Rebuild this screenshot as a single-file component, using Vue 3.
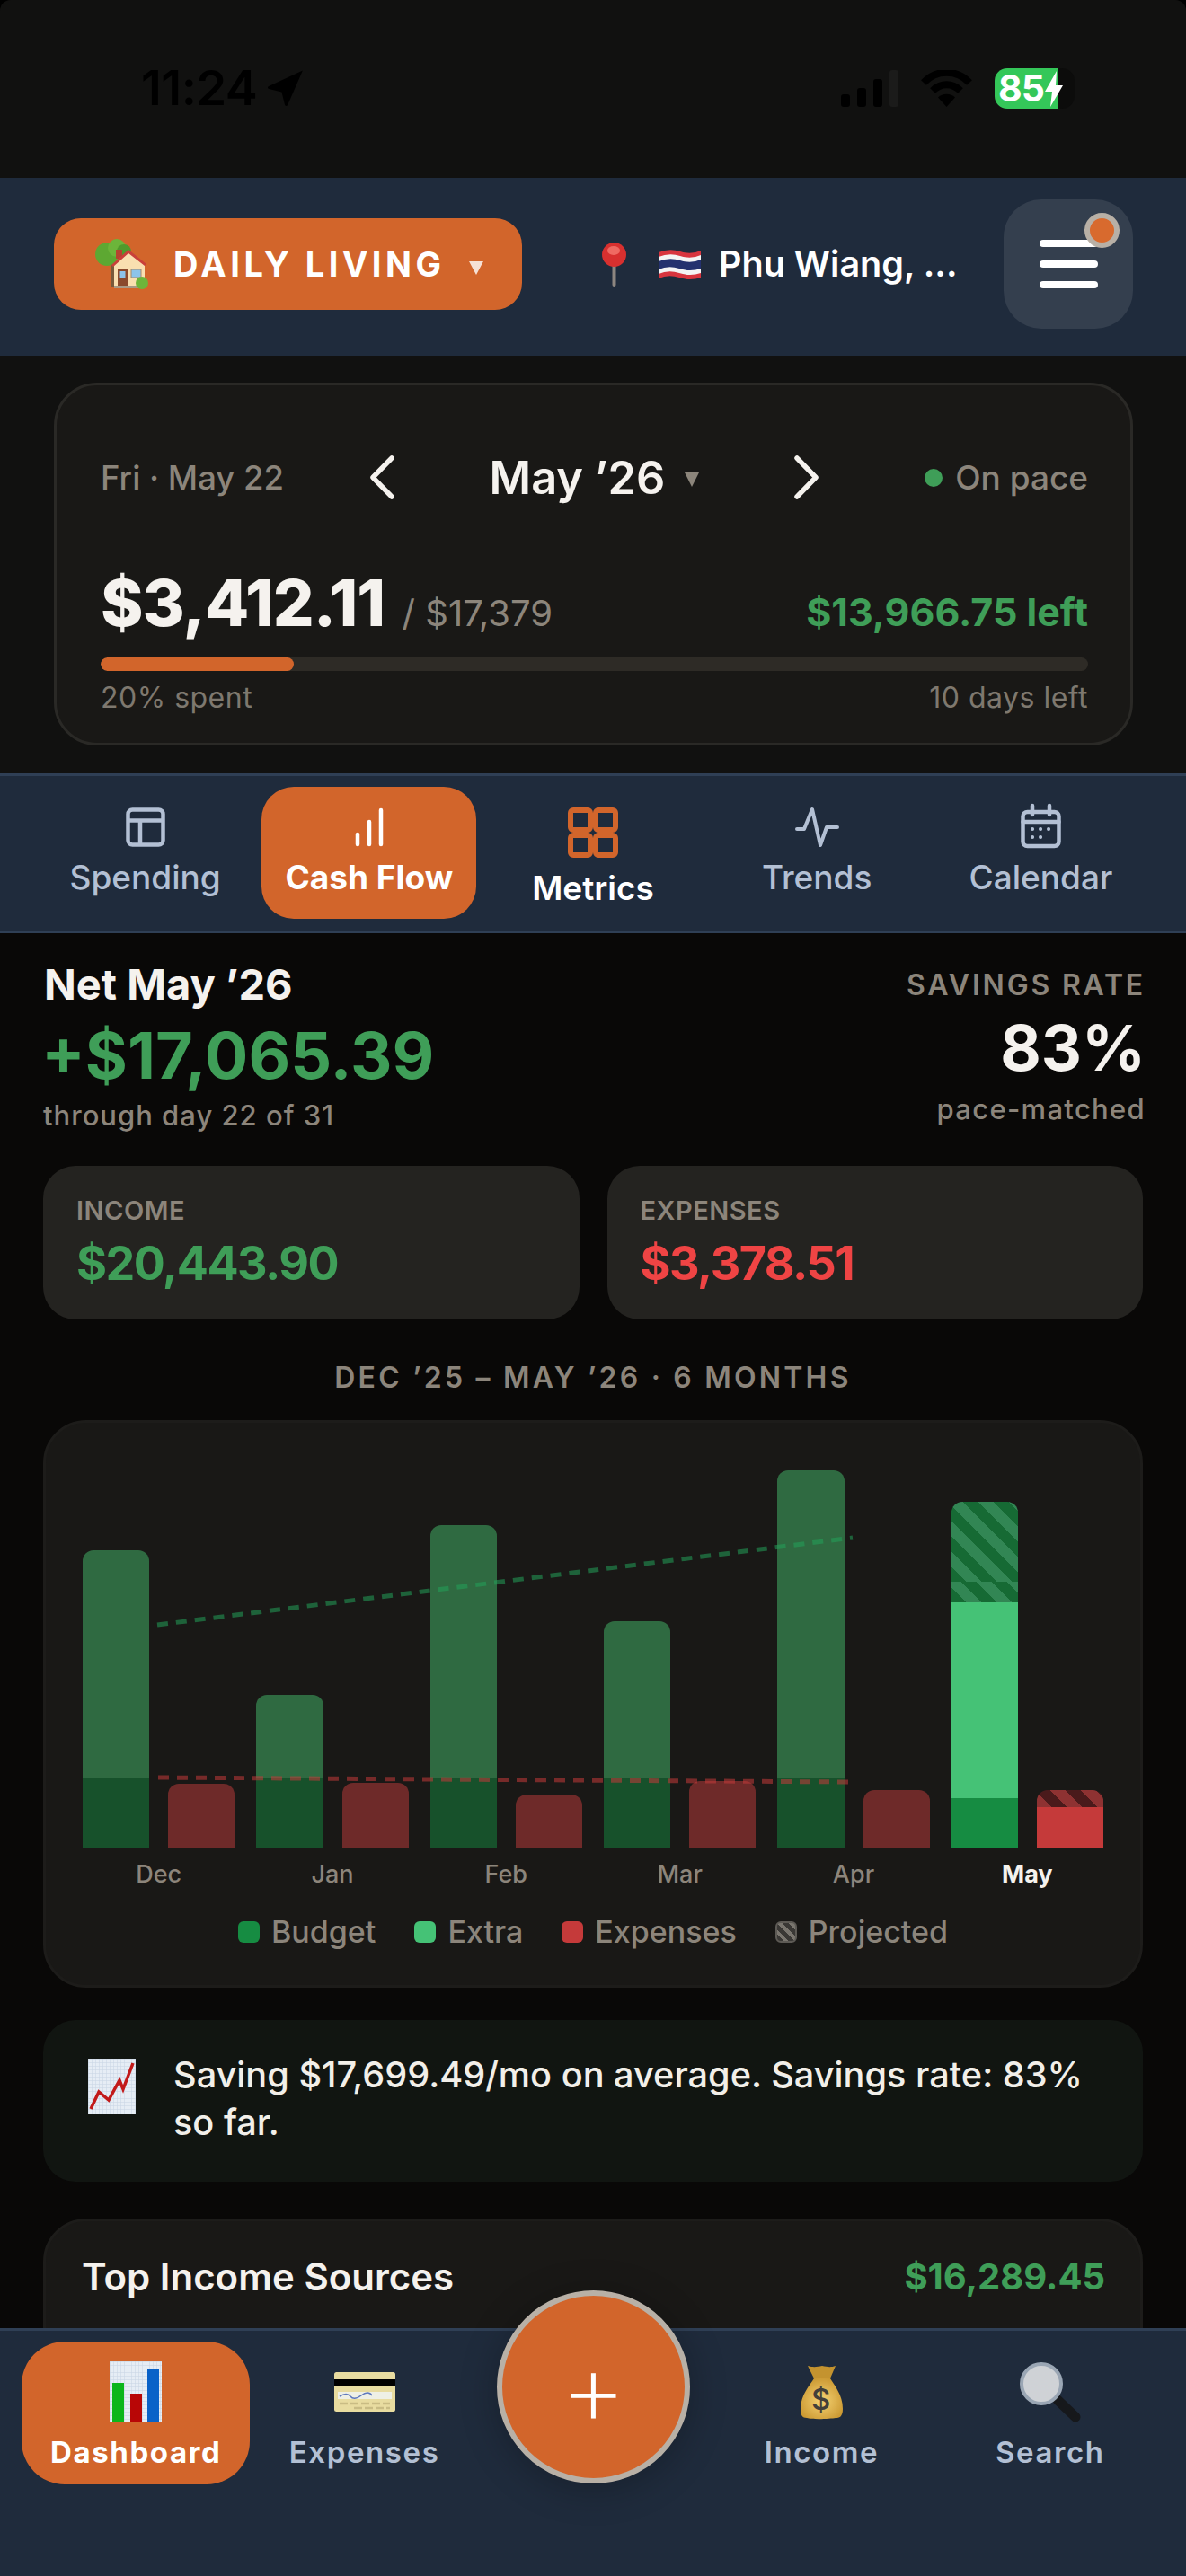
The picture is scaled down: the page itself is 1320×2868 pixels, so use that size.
<template>
  <div class="phone">
    <div class="status-bar">
      <div class="status-left">
        <span class="time">11:24</span>
        <svg class="loc-arrow" width="44" height="42" viewBox="0 0 40 40"><path d="M38 1.500 22 38c-.7 1.600-2.600 1.400-3-.3L15.700 24.300 2.300 21c-1.700-.4-1.900-2.300-.3-3L38 1.500Z" fill="#000"/></svg>
      </div>
      <div class="status-right">
        <div class="signal">
          <i style="height: 14px"></i>
          <i style="height: 21px"></i>
          <i style="height: 31px"></i>
          <i class="dim" style="height: 41px"></i>
        </div>
        <svg width="57" height="41" viewBox="0 0 57 41" fill="none" stroke="#000" stroke-width="8">
          <path d="M3 14C17-1 40-1 54 14"/>
          <path d="M13 23c9-9 22-9 31 0"/>
          <path d="M28.500 41 19 30.500c5-5 14-5 19 0L28.500 41Z" fill="#000" stroke="none"/>
        </svg>
        <div class="battery">
          <span class="battery-fill">85</span>
          <span class="battery-end"></span>
          <svg class="bolt" width="22" height="40" viewBox="0 0 22 40"><path d="M14 0 1 23h8L7 40l14-24h-8l1-16Z" fill="#fff"/></svg>
        </div>
      </div>
    </div>

    <header class="top-bar">
      <button class="plan-pill">
        <svg class="house" width="59" height="56" viewBox="0 0 59 56">
          <rect x="17" y="26" width="4" height="28" fill="#7a5a3a"/>
          <circle cx="13" cy="17" r="13" fill="#5da832"/>
          <circle cx="24" cy="10" r="10" fill="#6cb53a"/>
          <circle cx="32" cy="14" r="8" fill="#4f9a2c"/>
          <rect x="23" y="12" width="7" height="10" fill="#b5432f"/>
          <path d="M21 28 37 15l18 13v26H21Z" fill="#f9dfb0"/>
          <path d="M18 29 37 12l20 16-2 2-18-14-17 15Z" fill="#c9403a"/>
          <rect x="25" y="33" width="11" height="21" fill="#8a4a2c"/>
          <rect x="27.500" y="36" width="6" height="7" fill="#8cc4ea"/>
          <rect x="40" y="34" width="11" height="9" fill="#8cc4ea" stroke="#a88a66" stroke-width="1"/>
          <rect x="21" y="52" width="30" height="3" fill="#a89a86"/>
          <circle cx="52" cy="49" r="7" fill="#6cb53a"/>
        </svg>
        <span class="plan-name">DAILY LIVING</span>
        <span class="plan-caret"></span>
      </button>
      <div class="place">
        <svg width="27" height="49" viewBox="0 0 27 49">
          <rect x="11.500" y="20" width="4" height="29" rx="2" fill="#8d8680"/>
          <circle cx="13.500" cy="13.500" r="13.500" fill="#d8302f"/>
          <ellipse cx="13" cy="9" rx="7" ry="5" fill="#ef6a62"/>
        </svg>
        <svg class="flag" width="47" height="33" viewBox="0 0 47 33">
          <path d="M0 3Q12-2 24 2T47 1V31Q35 35 23 31T0 32Z" fill="#d8353f"/>
          <path d="M0 8Q12 3 24 7T47 6V26Q35 30 23 26T0 27Z" fill="#f4f4f4"/>
          <path d="M0 13Q12 8 24 12T47 11V21Q35 25 23 21T0 22Z" fill="#24316e"/>
        </svg>
        <span class="place-name">Phu Wiang, ...</span>
      </div>
      <button class="menu-btn">
        <i></i><i></i><i></i>
        <span class="menu-dot"></span>
      </button>
    </header>

    <section class="summary-wrap">
      <div class="summary-card">
        <div class="date-row">
          <span class="today">Fri · May 22</span>
          <div class="month-nav">
            <svg width="28" height="49" viewBox="0 0 28 49" fill="none" stroke="#f5f2ee" stroke-width="5.500" stroke-linecap="round" stroke-linejoin="round"><path d="M25 3 4 24.500 25 46"/></svg>
            <div class="month"><span>May ’26</span><b class="month-caret"></b></div>
            <svg width="28" height="49" viewBox="0 0 28 49" fill="none" stroke="#f5f2ee" stroke-width="5.500" stroke-linecap="round" stroke-linejoin="round"><path d="M3 3 24 24.500 3 46"/></svg>
          </div>
          <div class="pace"><i></i><span>On pace</span></div>
        </div>
        <div class="amount-row">
          <div><span class="spent">$3,412.11</span> <span class="budget">/ $17,379</span></div>
          <span class="left">$13,966.75 left</span>
        </div>
        <div class="progress"><div class="progress-fill" :style="{ width: spentPct + '%' }"></div></div>
        <div class="progress-labels">
          <span>20% spent</span>
          <span>10 days left</span>
        </div>
      </div>
    </section>

    <nav class="tabs">
      <div v-for="t in tabs" :key="t.name" class="tab" :class="{ active: t.name === 'Cash Flow', metrics: t.name === 'Metrics' }">
        <svg v-if="t.name === 'Spending'" width="44" height="44" viewBox="0 0 44 44" fill="none" stroke="#b3c0d4" stroke-width="4.500" stroke-linejoin="round">
          <rect x="2.500" y="2.500" width="39" height="39" rx="5"/><path d="M2.500 14.500h39M16 14.500v27"/>
        </svg>
        <svg v-if="t.name === 'Cash Flow'" width="32" height="44" viewBox="0 0 32 44" fill="none" stroke="#fff" stroke-width="4.500" stroke-linecap="round">
          <path d="M3 30v11M16 16v25M29 3v38"/>
        </svg>
        <svg v-if="t.name === 'Metrics'" width="56" height="56" viewBox="0 0 56 56" fill="none" stroke="#d2652b" stroke-width="6">
          <rect x="3" y="3" width="22" height="22" rx="3"/><rect x="31" y="3" width="22" height="22" rx="3"/>
          <rect x="3" y="31" width="22" height="22" rx="3"/><rect x="31" y="31" width="22" height="22" rx="3"/>
        </svg>
        <svg v-if="t.name === 'Trends'" width="49" height="44" viewBox="0 0 49 44" fill="none" stroke="#b3c0d4" stroke-width="4" stroke-linecap="round" stroke-linejoin="round">
          <path d="M2 24h8l9-22 9 40 7-20h12"/>
        </svg>
        <svg v-if="t.name === 'Calendar'" class="cal" width="45" height="44" viewBox="0 2 45 44" fill="none" stroke="#b3c0d4" stroke-width="4.500" stroke-linecap="round">
          <rect x="2.500" y="7" width="40" height="38" rx="5"/><path d="M2.500 18h40M13 0v10M32 0v10"/>
          <path d="M13 26h.1M22 26h.1M31 26h.1M13 35h.1M22 35h.1" stroke-width="4"/>
        </svg>
        <span class="tab-label">{{ t.name }}</span>
      </div>
    </nav>

    <main class="content">
      <div class="net-row">
        <div>
          <div class="net-title">Net May ’26</div>
          <div class="net-value">+$17,065.39</div>
          <div class="net-sub">through day 22 of 31</div>
        </div>
        <div class="rate">
          <div class="rate-label">SAVINGS RATE</div>
          <div class="rate-value">83%</div>
          <div class="rate-sub">pace-matched</div>
        </div>
      </div>

      <div class="stats">
        <div class="stat">
          <div class="stat-label">INCOME</div>
          <div class="stat-value green">$20,443.90</div>
        </div>
        <div class="stat">
          <div class="stat-label">EXPENSES</div>
          <div class="stat-value red">$3,378.51</div>
        </div>
      </div>

      <div class="range">DEC ’25 – MAY ’26 · 6 MONTHS</div>

      <div class="chart-card">
        <div class="plot">
          <div v-for="m in months" :key="m.name" class="group">
            <div class="bar">
              <div v-for="(s, i) in m.income" :key="i" :class="s.c" :style="{ height: s.h + 'px' }"></div>
            </div>
            <div class="bar">
              <div v-for="(s, i) in m.expense" :key="i" :class="s.c" :style="{ height: s.h + 'px' }"></div>
            </div>
          </div>
          <svg class="trend" width="1135" height="420" viewBox="0 0 1135 420" fill="none" stroke-width="5" stroke-dasharray="12 9">
            <path d="M83 172 857 75" stroke="#22a05a" stroke-opacity=".55"/>
            <path d="M84 342 852 347" stroke="#c53a3a" stroke-opacity=".55"/>
          </svg>
        </div>
        <div class="month-labels">
          <span v-for="m in months" :key="m.name" :class="{ current: m.name === 'May' }">{{ m.name }}</span>
        </div>
        <div class="legend">
          <div v-for="l in legend" :key="l.name" class="legend-item">
            <i :class="l.c"></i><span>{{ l.name }}</span>
          </div>
        </div>
      </div>

      <div class="insight">
        <svg class="insight-icon" width="53" height="62" viewBox="0 0 53 62">
          <defs>
            <pattern id="grid-a" width="4" height="4" patternUnits="userSpaceOnUse">
              <path d="M4 0H0V4" fill="none" stroke="#c6d4e4" stroke-width="1"/>
            </pattern>
          </defs>
          <rect width="53" height="62" fill="#e6edf5"/>
          <rect width="53" height="62" fill="url(#grid-a)"/>
          <path d="M3 56 12 37l11 9L35 24l4 10L50 5" fill="none" stroke="#c21a1a" stroke-width="3.500"/>
        </svg>
        <p>Saving $17,699.49/mo on average. Savings rate: 83% so far.</p>
      </div>

      <div class="top-card">
        <span class="top-title">Top Income Sources</span>
        <span class="top-value">$16,289.45</span>
      </div>
    </main>

    <nav class="bottom-nav">
      <div class="nav-item active">
        <div class="nav-icon">
          <svg width="58" height="68" viewBox="0 0 58 68">
            <defs>
              <pattern id="grid-b" width="4" height="4" patternUnits="userSpaceOnUse">
                <path d="M4 0H0V4" fill="none" stroke="#c6d4e4" stroke-width="1"/>
              </pattern>
            </defs>
            <rect width="58" height="68" fill="#e6edf5"/>
            <rect width="58" height="68" fill="url(#grid-b)"/>
            <rect x="3" y="24" width="13" height="44" fill="#0cb61c"/>
            <rect x="23" y="36" width="13" height="32" fill="#b80606"/>
            <rect x="42" y="9" width="13" height="59" fill="#0a62c8"/>
          </svg>
        </div>
        <span>Dashboard</span>
      </div>
      <div class="nav-item">
        <div class="nav-icon">
          <svg width="68" height="44" viewBox="0 0 68 44">
            <rect width="68" height="44" rx="2.500" fill="#e8dca0"/>
            <rect y="8" width="68" height="7" fill="#000"/>
            <rect x="4" y="22" width="60" height="8" fill="#eef0e6"/>
            <path d="M6 27q8-5 12 0t12-1 12 0" fill="none" stroke="#5f79bd" stroke-width="1.500"/>
            <path d="M6 35h56M22 40h40" stroke="#c9bc84" stroke-width="2.500" stroke-dasharray="9 3"/>
          </svg>
        </div>
        <span>Expenses</span>
      </div>
      <div class="nav-gap"></div>
      <div class="nav-item">
        <div class="nav-icon">
          <svg width="47" height="62" viewBox="0 0 47 62">
            <defs>
              <radialGradient id="bag" cx="0.5" cy="0.55" r="0.6">
                <stop offset="0" stop-color="#f6d374"/>
                <stop offset="1" stop-color="#c9962f"/>
              </radialGradient>
            </defs>
            <path d="M8 2c7 2 10 1 16 0 6 1 9 2 15 0l-6 14H15Z" fill="#c4932f"/>
            <path d="M15 16h18c4 7 14 18 14 34 0 9-4 10-8 10-5 1-26 2-32 0-5 0-7-3-7-10 0-16 11-27 15-34Z" fill="url(#bag)"/>
            <text x="23.500" y="51" text-anchor="middle" font-family="Inter, sans-serif" font-size="33" font-weight="500" fill="#43403a">$</text>
          </svg>
        </div>
        <span>Income</span>
      </div>
      <div class="nav-item">
        <div class="nav-icon">
          <svg width="68" height="67" viewBox="0 0 68 67">
            <path d="M42 42 62 61" stroke="#16181b" stroke-width="11" stroke-linecap="round"/>
            <circle cx="24" cy="24" r="22" fill="#cfd2d6" stroke="#9aa6b4" stroke-width="4"/>
          </svg>
        </div>
        <span>Search</span>
      </div>
    </nav>

    <button class="fab">+</button>
  </div>
</template>

<script setup>
const spentPct = 19.6

const tabs = [
  { name: 'Spending' },
  { name: 'Cash Flow' },
  { name: 'Metrics' },
  { name: 'Trends' },
  { name: 'Calendar' }
]

// past months: income bar is extra on top of budget, expense is one block
const past = (name, total, spent) => ({
  name,
  income: [
    { c: 'past-extra', h: total - 78 },
    { c: 'past-budget', h: 78 }
  ],
  expense: [{ c: 'past-expense', h: spent }]
})

const months = [
  past('Dec', 331, 71),
  past('Jan', 170, 72),
  past('Feb', 359, 59),
  past('Mar', 252, 74),
  past('Apr', 420, 64),
  {
    name: 'May',
    income: [
      { c: 'proj-green', h: 89 },
      { c: 'proj-green', h: 23 },
      { c: 'now-extra', h: 218 },
      { c: 'now-budget', h: 55 }
    ],
    expense: [
      { c: 'proj-red', h: 19 },
      { c: 'now-expense', h: 45 }
    ]
  }
]

const legend = [
  { name: 'Budget', c: 'now-budget' },
  { name: 'Extra', c: 'now-extra' },
  { name: 'Expenses', c: 'now-expense' },
  { name: 'Projected', c: 'swatch-proj' }
]
</script>

<style>
html, body {
  margin: 0;
  background: #000;
}
</style>

<style scoped>
.phone {
  position: relative;
  width: 1320px;
  height: 2868px;
  display: flex;
  flex-direction: column;
  overflow: hidden;
  border-radius: 12px 12px 0 0;
  background: #090807;
  font-family: Inter, "Noto Sans", sans-serif;
  color: #f5f2ee;
}

button {
  border: none;
  padding: 0;
  font-family: inherit;
}

/* status bar */
.status-bar {
  height: 198px;
  flex: none;
  box-sizing: border-box;
  padding: 0 124px 2px 157px;
  display: flex;
  align-items: center;
  justify-content: space-between;
  background: #111110;
}

.status-left {
  display: flex;
  align-items: center;
  gap: 10px;
}

.time {
  font-size: 54px;
  line-height: 52px;
  font-weight: 600;
  letter-spacing: -0.5px;
  color: #000;
}

.status-right {
  display: flex;
  align-items: center;
  gap: 25px;
}

.signal {
  display: flex;
  align-items: flex-end;
  gap: 8px;
  height: 41px;
}

.signal i {
  width: 10px;
  border-radius: 3px;
  background: #000;
}

.signal i.dim {
  background: #1b1b1a;
}

.battery {
  position: relative;
  display: flex;
  height: 45px;
}

.battery-fill {
  width: 71px;
  box-sizing: border-box;
  padding-left: 4px;
  border-radius: 14px 0 0 14px;
  background: #34c759;
  color: #fff;
  font-size: 41px;
  line-height: 45px;
  font-weight: 700;
  letter-spacing: -1px;
}

.battery-end {
  width: 18px;
  border-radius: 0 14px 14px 0;
  background: #0c0c0b;
}

.bolt {
  position: absolute;
  left: 55px;
  top: 3px;
}

/* header */
.top-bar {
  height: 198px;
  flex: none;
  box-sizing: border-box;
  padding: 0 59px 6px 60px;
  display: flex;
  align-items: center;
  background: #1f2b3c;
}

.plan-pill {
  width: 521px;
  height: 102px;
  flex: none;
  box-sizing: border-box;
  padding-left: 46px;
  display: flex;
  align-items: center;
  border-radius: 30px;
  background: #d2652b;
  color: #fff;
}

.plan-name {
  margin-left: 28px;
  font-size: 38px;
  font-weight: 700;
  letter-spacing: 4.500px;
  white-space: nowrap;
}

.plan-caret {
  width: 0;
  height: 0;
  margin-left: 26px;
  margin-top: 8px;
  border-left: 8px solid transparent;
  border-right: 8px solid transparent;
  border-top: 15px solid rgba(255, 255, 255, 0.8);
}

.place {
  margin-left: 89px;
  display: flex;
  align-items: center;
}

.flag {
  margin-left: 36px;
}

.place-name {
  margin-left: 20px;
  font-size: 39.500px;
  font-weight: 600;
  color: #fff;
  white-space: nowrap;
}

.menu-btn {
  position: relative;
  width: 144px;
  height: 144px;
  margin-left: auto;
  border-radius: 42px;
  background: #343f4e;
  display: flex;
  flex-direction: column;
  align-items: center;
  justify-content: center;
  gap: 15px;
}

.menu-btn i {
  width: 65px;
  height: 8px;
  border-radius: 4px;
  background: #fff;
}

.menu-dot {
  position: absolute;
  top: 15px;
  right: 15px;
  width: 39px;
  height: 39px;
  box-sizing: border-box;
  border-radius: 50%;
  border: 6px solid #b8b0a6;
  background: #d86a2e;
}

/* month summary */
.summary-wrap {
  height: 465px;
  flex: none;
  box-sizing: border-box;
  padding: 30px 59px 0 60px;
  background: #111110;
}

.summary-card {
  height: 404px;
  box-sizing: border-box;
  padding: 72px 47px 0 49px;
  border: 3px solid #2a2926;
  border-radius: 48px;
  background: #191816;
}

.date-row {
  height: 58px;
  display: grid;
  grid-template-columns: 1fr auto 1fr;
  align-items: center;
}

.today {
  font-size: 36.500px;
  font-weight: 500;
  color: #8c857b;
}

.month-nav {
  display: flex;
  align-items: center;
  gap: 106px;
}

.month {
  display: flex;
  align-items: center;
  gap: 22px;
  font-size: 50.500px;
  font-weight: 600;
  white-space: nowrap;
}

.month-caret {
  width: 0;
  height: 0;
  margin-top: 4px;
  border-left: 8px solid transparent;
  border-right: 8px solid transparent;
  border-top: 16px solid #8c857b;
}

.pace {
  display: flex;
  align-items: center;
  justify-content: flex-end;
  gap: 14px;
  font-size: 37px;
  font-weight: 500;
  color: #8c857b;
}

.pace i {
  width: 20px;
  height: 20px;
  border-radius: 50%;
  background: #3f9e58;
}

.amount-row {
  margin-top: 76px;
  height: 72px;
  display: flex;
  align-items: baseline;
  justify-content: space-between;
}

.spent {
  font-size: 72px;
  line-height: 72px;
  font-weight: 800;
  letter-spacing: -1px;
  margin-right: 15px;
}

.budget {
  font-size: 40px;
  color: #8c857b;
}

.left {
  font-size: 43px;
  font-weight: 700;
  color: #3f9e58;
}

.progress {
  margin-top: 25px;
  height: 15px;
  border-radius: 8px;
  background: #2e2b26;
  overflow: hidden;
}

.progress-fill {
  height: 100%;
  border-radius: 8px;
  background: #d2652b;
}

.progress-labels {
  margin-top: 10px;
  display: flex;
  justify-content: space-between;
  font-size: 32px;
  line-height: 40px;
  letter-spacing: 0.500px;
  color: #7e786f;
}

/* view tabs */
.tabs {
  height: 178px;
  flex: none;
  box-sizing: border-box;
  padding: 12px 42px;
  display: grid;
  grid-template-columns: repeat(5, 1fr);
  gap: 10px;
  border-top: 3px solid #2f3f55;
  border-bottom: 3px solid #2f3f55;
  background: #1f2b3c;
}

.tab {
  height: 147px;
  box-sizing: border-box;
  padding-top: 23px;
  display: flex;
  flex-direction: column;
  align-items: center;
  border-radius: 36px;
  color: #b3c0d4;
}

.tab svg {
  flex: none;
  overflow: visible;
}

.tab.active {
  background: #d2652b;
  color: #fff;
}

.tab.metrics {
  color: #fff;
}

.tab-label {
  margin-top: 12px;
  font-size: 37px;
  line-height: 44px;
  font-weight: 500;
}

.tab.active .tab-label {
  font-weight: 700;
}

.tab.metrics .tab-label {
  font-weight: 600;
}

/* cash flow content */
.content {
  flex: 1;
  min-height: 0;
  overflow: hidden;
  box-sizing: border-box;
  padding: 29px 48px 0;
}

.net-row {
  display: flex;
  justify-content: space-between;
}

.net-title {
  font-size: 47px;
  line-height: 56px;
  font-weight: 700;
  margin-left: 1px;
}

.net-value {
  margin-top: 11px;
  font-size: 72px;
  line-height: 80px;
  font-weight: 700;
  color: #3f9e58;
  margin-left: -2px;
}

.net-sub {
  margin-top: 7px;
  font-size: 31px;
  line-height: 40px;
  font-weight: 500;
  letter-spacing: 1px;
  color: #8c857b;
}

.rate {
  text-align: right;
  margin-right: -3px;
}

.rate-label {
  margin-top: 9px;
  font-size: 32px;
  line-height: 40px;
  font-weight: 600;
  letter-spacing: 2.800px;
  color: #8c857b;
}

.rate-value {
  margin-top: 8px;
  font-size: 70px;
  line-height: 84px;
  font-weight: 700;
}

.rate-sub {
  margin-top: 6px;
  font-size: 31px;
  line-height: 40px;
  font-weight: 500;
  letter-spacing: 1.300px;
  color: #8c857b;
}

.stats {
  margin-top: 36px;
  display: grid;
  grid-template-columns: 1fr 1fr;
  gap: 31px;
}

.stat {
  height: 171px;
  box-sizing: border-box;
  padding: 32px 37px 0;
  border-radius: 36px;
  background: #242320;
}

.stat-label {
  font-size: 29px;
  line-height: 36px;
  font-weight: 600;
  letter-spacing: 0.500px;
  color: #8c857b;
}

.stat-value {
  margin-top: 9px;
  font-size: 52px;
  line-height: 64px;
  font-weight: 700;
  letter-spacing: -1.500px;
}

.green {
  color: #3f9e58;
}

.red {
  color: #ef4444;
}

.range {
  margin-top: 45px;
  text-align: center;
  font-size: 32px;
  line-height: 40px;
  font-weight: 600;
  letter-spacing: 3.200px;
  color: #8c857b;
}

/* chart */
.chart-card {
  height: 632px;
  box-sizing: border-box;
  margin-top: 27px;
  padding: 53px 41px 0;
  border: 3px solid #1d1c1a;
  border-radius: 48px;
  background: #191816;
}

.plot {
  position: relative;
  height: 420px;
  display: grid;
  grid-template-columns: repeat(6, 1fr);
  gap: 24px;
}

.group {
  display: flex;
  gap: 21px;
  align-items: flex-end;
}

.bar {
  flex: 1;
  border-radius: 12px 12px 0 0;
  overflow: hidden;
}

.trend {
  position: absolute;
  left: 0;
  top: 0;
  pointer-events: none;
}

.past-extra {
  background: #2f6a41;
}

.past-budget {
  background: #17512b;
}

.past-expense {
  background: #6e2a29;
}

.now-budget {
  background: #168c42;
}

.now-extra {
  background: #45c276;
}

.now-expense {
  background: #c53a3a;
}

.proj-green {
  background: repeating-linear-gradient(45deg, #166a34 0 12px, #328654 12px 24px);
}

.proj-red {
  background: repeating-linear-gradient(45deg, #8e3232 0 12px, #4a1a1b 12px 24px);
}

.swatch-proj {
  box-sizing: border-box;
  border: 2px solid #5d5a55;
  background: repeating-linear-gradient(45deg, #3a3835 0 5px, #7a766f 5px 9px);
}

.month-labels {
  margin-top: 12px;
  display: grid;
  grid-template-columns: repeat(6, 1fr);
  gap: 24px;
  text-align: center;
  font-size: 27px;
  line-height: 36px;
  font-weight: 500;
  color: #8c857b;
}

.month-labels .current {
  color: #f5f2ee;
  font-weight: 700;
}

.legend {
  margin-top: 24px;
  display: flex;
  justify-content: center;
  gap: 43px;
  font-size: 34px;
  line-height: 44px;
  font-weight: 500;
  color: #8c857b;
}

.legend-item {
  display: flex;
  align-items: center;
  gap: 13px;
}

.legend-item i {
  width: 24px;
  height: 24px;
  border-radius: 6px;
}

/* insight */
.insight {
  margin-top: 36px;
  height: 180px;
  box-sizing: border-box;
  padding: 35px 50px 0;
  display: flex;
  gap: 42px;
  border-radius: 36px;
  background: #111511;
}

.insight-icon {
  flex: none;
  margin-top: 8px;
}

.insight p {
  margin: 0;
  font-size: 39.700px;
  line-height: 53px;
  font-weight: 500;
  color: #f2efe9;
}

.top-card {
  margin-top: 41px;
  height: 300px;
  box-sizing: border-box;
  padding: 34px 39px 0 40px;
  display: flex;
  justify-content: space-between;
  align-items: flex-start;
  border: 3px solid #1d1c1a;
  border-radius: 48px;
  background: #191816;
}

.top-title {
  font-size: 42px;
  line-height: 56px;
  font-weight: 600;
}

.top-value {
  font-size: 40px;
  line-height: 56px;
  font-weight: 700;
  color: #3f9e58;
}

/* bottom nav */
.bottom-nav {
  position: relative;
  height: 276px;
  flex: none;
  box-sizing: border-box;
  padding: 12px 24px 0;
  display: grid;
  grid-template-columns: repeat(5, 1fr);
  align-items: start;
  border-top: 3px solid #2f3f55;
  background: #1f2b3c;
}

.nav-item {
  height: 159px;
  box-sizing: border-box;
  padding-top: 22px;
  display: flex;
  flex-direction: column;
  align-items: center;
  border-radius: 48px;
  font-size: 33px;
  line-height: 40px;
  font-weight: 600;
  letter-spacing: 1.600px;
  color: #b3c0d4;
}

.nav-item.active {
  background: #d2652b;
  color: #fff;
  font-weight: 700;
}

.nav-icon {
  height: 68px;
  margin-bottom: 13px;
  display: flex;
  align-items: center;
  justify-content: center;
}

.fab {
  position: absolute;
  left: 553px;
  top: 2550px;
  width: 215px;
  height: 215px;
  box-sizing: border-box;
  border: 6px solid #b8b0a6;
  border-radius: 50%;
  background: #d2652b;
  color: #fff;
  font-size: 116px;
  line-height: 200px;
  font-weight: 200;
  text-align: center;
  box-shadow: 0 6px 40px rgba(0, 0, 0, 0.25);
}
</style>
